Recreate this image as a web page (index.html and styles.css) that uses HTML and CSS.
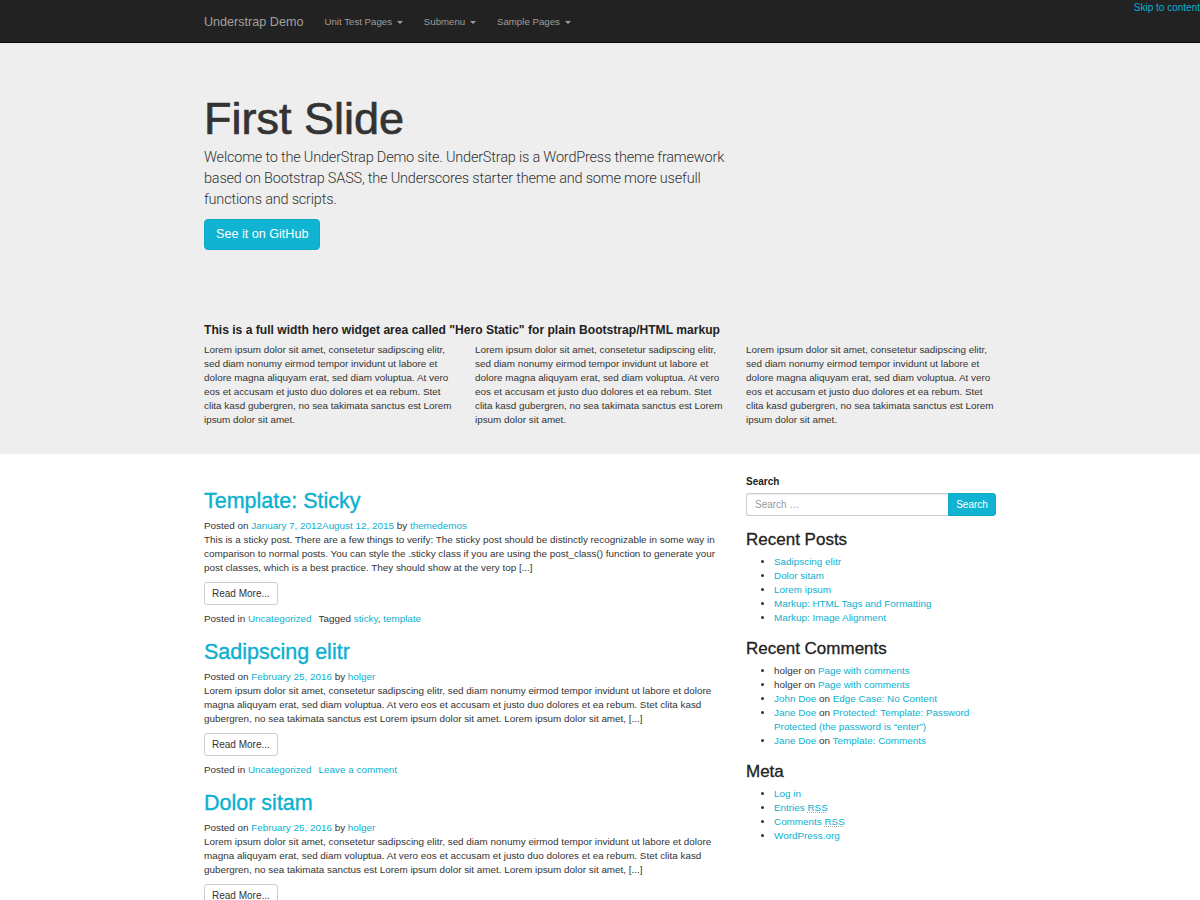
FILE: index.html
```html
<!DOCTYPE html>
<html lang="en">
<head>
<meta charset="utf-8">
<title>Understrap Demo</title>
<link rel="stylesheet" href="styles.css">
</head>
<body>
<a class="skip-link" href="#content">Skip to content</a>
<nav class="navbar">
  <div class="container navbar-inner">
    <a class="brand" href="#">Understrap Demo</a>
    <ul class="nav">
      <li><a href="#">Unit Test Pages <span class="caret"></span></a></li>
      <li><a href="#">Submenu <span class="caret"></span></a></li>
      <li><a href="#">Sample Pages <span class="caret"></span></a></li>
    </ul>
  </div>
</nav>

<section class="hero">
  <div class="container">
    <div class="slide">
      <h1 class="slide-title">First Slide</h1>
      <p class="slide-text">Welcome to the UnderStrap Demo site. UnderStrap is a WordPress theme framework based on Bootstrap SASS, the Underscores starter theme and some more usefull functions and scripts.</p>
      <a class="btn btn-primary" href="#">See it on GitHub</a>
    </div>
    <div class="hero-static">
      <h3 class="hero-static-title">This is a full width hero widget area called "Hero Static" for plain Bootstrap/HTML markup</h3>
      <div class="hero-cols">
        <p>Lorem ipsum dolor sit amet, consetetur sadipscing elitr, sed diam nonumy eirmod tempor invidunt ut labore et dolore magna aliquyam erat, sed diam voluptua. At vero eos et accusam et justo duo dolores et ea rebum. Stet clita kasd gubergren, no sea takimata sanctus est Lorem ipsum dolor sit amet.</p>
        <p>Lorem ipsum dolor sit amet, consetetur sadipscing elitr, sed diam nonumy eirmod tempor invidunt ut labore et dolore magna aliquyam erat, sed diam voluptua. At vero eos et accusam et justo duo dolores et ea rebum. Stet clita kasd gubergren, no sea takimata sanctus est Lorem ipsum dolor sit amet.</p>
        <p>Lorem ipsum dolor sit amet, consetetur sadipscing elitr, sed diam nonumy eirmod tempor invidunt ut labore et dolore magna aliquyam erat, sed diam voluptua. At vero eos et accusam et justo duo dolores et ea rebum. Stet clita kasd gubergren, no sea takimata sanctus est Lorem ipsum dolor sit amet.</p>
      </div>
    </div>
  </div>
</section>

<div class="container main-wrap" id="content">
  <main class="posts">
    <article class="post">
      <h2 class="post-title"><a href="#">Template: Sticky</a></h2>
      <div class="post-meta">Posted on <a href="#">January 7, 2012August 12, 2015</a> by <a href="#">themedemos</a></div>
      <p class="post-excerpt">This is a sticky post. There are a few things to verify: The sticky post should be distinctly recognizable in some way in comparison to normal posts. You can style the .sticky class if you are using the post_class() function to generate your post classes, which is a best practice. They should show at the very top [...]</p>
      <a class="btn btn-default" href="#">Read More...</a>
      <div class="post-footer"><span class="footer-item">Posted in <a href="#">Uncategorized</a></span><span class="footer-item">Tagged <a href="#">sticky</a>, <a href="#">template</a></span></div>
    </article>
    <article class="post">
      <h2 class="post-title"><a href="#">Sadipscing elitr</a></h2>
      <div class="post-meta">Posted on <a href="#">February 25, 2016</a> by <a href="#">holger</a></div>
      <p class="post-excerpt">Lorem ipsum dolor sit amet, consetetur sadipscing elitr, sed diam nonumy eirmod tempor invidunt ut labore et dolore magna aliquyam erat, sed diam voluptua. At vero eos et accusam et justo duo dolores et ea rebum. Stet clita kasd gubergren, no sea takimata sanctus est Lorem ipsum dolor sit amet. Lorem ipsum dolor sit amet, [...]</p>
      <a class="btn btn-default" href="#">Read More...</a>
      <div class="post-footer"><span class="footer-item">Posted in <a href="#">Uncategorized</a></span><span class="footer-item"><a href="#">Leave a comment</a></span></div>
    </article>
    <article class="post">
      <h2 class="post-title"><a href="#">Dolor sitam</a></h2>
      <div class="post-meta">Posted on <a href="#">February 25, 2016</a> by <a href="#">holger</a></div>
      <p class="post-excerpt">Lorem ipsum dolor sit amet, consetetur sadipscing elitr, sed diam nonumy eirmod tempor invidunt ut labore et dolore magna aliquyam erat, sed diam voluptua. At vero eos et accusam et justo duo dolores et ea rebum. Stet clita kasd gubergren, no sea takimata sanctus est Lorem ipsum dolor sit amet. Lorem ipsum dolor sit amet, [...]</p>
      <a class="btn btn-default" href="#">Read More...</a>
      <div class="post-footer"><span class="footer-item">Posted in <a href="#">Uncategorized</a></span><span class="footer-item"><a href="#">Leave a comment</a></span></div>
    </article>
  </main>

  <aside class="sidebar">
    <section class="widget widget-search">
      <label class="search-label">Search</label>
      <form class="search-form">
        <input class="search-input" type="text" placeholder="Search …">
        <button class="search-btn" type="button">Search</button>
      </form>
    </section>
    <section class="widget">
      <h3 class="widget-title">Recent Posts</h3>
      <ul class="widget-list">
        <li><a href="#">Sadipscing elitr</a></li>
        <li><a href="#">Dolor sitam</a></li>
        <li><a href="#">Lorem ipsum</a></li>
        <li><a href="#">Markup: HTML Tags and Formatting</a></li>
        <li><a href="#">Markup: Image Alignment</a></li>
      </ul>
    </section>
    <section class="widget">
      <h3 class="widget-title">Recent Comments</h3>
      <ul class="widget-list">
        <li>holger on <a href="#">Page with comments</a></li>
        <li>holger on <a href="#">Page with comments</a></li>
        <li><a href="#">John Doe</a> on <a href="#">Edge Case: No Content</a></li>
        <li><a href="#">Jane Doe</a> on <a href="#">Protected: Template: Password Protected (the password is “enter”)</a></li>
        <li><a href="#">Jane Doe</a> on <a href="#">Template: Comments</a></li>
      </ul>
    </section>
    <section class="widget">
      <h3 class="widget-title">Meta</h3>
      <ul class="widget-list">
        <li><a href="#">Log in</a></li>
        <li><a href="#">Entries <abbr title="Really Simple Syndication">RSS</abbr></a></li>
        <li><a href="#">Comments <abbr title="Really Simple Syndication">RSS</abbr></a></li>
        <li><a href="#">WordPress.org</a></li>
      </ul>
    </section>
  </aside>
</div>
</body>
</html>
```

FILE: styles.css
```css
* { box-sizing: border-box; }

html {
  scrollbar-width: none;
}

html, body {
  margin: 0;
  padding: 0;
}

body {
  font-family: "Liberation Sans", Arial, Helvetica, sans-serif;
  font-size: 9.9px;
  line-height: 14px;
  color: #333;
  background: #fff;
}

a {
  color: #0ab0cf;
  text-decoration: none;
}

.container {
  width: 813px;
  margin: 0 auto;
  padding: 0 10.5px;
}

/* Skip link */
.skip-link {
  position: absolute;
  top: 0;
  right: 0;
  font-size: 10px;
  line-height: 14px;
  padding-top: 1px;
  color: #0ab0cf;
  z-index: 10;
}

/* Navbar */
.navbar {
  background: #222;
  border-bottom: 1px solid #080808;
  height: 43px;
}

.navbar-inner {
  display: flex;
  align-items: center;
  height: 42px;
}

.brand {
  color: #a0a0a0;
  font-size: 12.6px;
  line-height: 18px;
  padding-right: 10.5px;
  margin-top: 2px;
}

.nav {
  list-style: none;
  margin: 0;
  padding: 0;
  display: flex;
}

.nav a {
  display: block;
  color: #9d9d9d;
  font-size: 9.7px;
  line-height: 14px;
  padding: 2px 10.5px 0;
}

.caret {
  display: inline-block;
  width: 0;
  height: 0;
  margin-left: 2px;
  vertical-align: middle;
  border-top: 3px solid #9d9d9d;
  border-left: 3px solid transparent;
  border-right: 3px solid transparent;
}

/* Hero */
.hero {
  background: #eee;
  padding-top: 51px;
  padding-bottom: 27px;
}

.slide-title {
  font-size: 45px;
  line-height: 49.5px;
  font-weight: normal;
  color: #333;
  margin: 0 0 3px;
  -webkit-text-stroke: 0.7px #333;
}

.slide-text {
  font-family: Roboto, "Liberation Sans", Arial, sans-serif;
  font-weight: 300;
  font-size: 14.5px;
  letter-spacing: -0.2px;
  line-height: 21px;
  color: #333;
  margin: 0 0 9.5px;
  max-width: 530px;
}

.btn {
  display: inline-block;
  border: 1px solid transparent;
  border-radius: 3px;
}

.btn-primary {
  background: #10b3d1;
  border-color: #0ea9c5;
  color: #fff;
  font-size: 12.6px;
  line-height: 17px;
  padding: 6px 11px;
  border-radius: 4px;
}

.hero-static {
  margin-top: 73px;
}

.hero-static-title {
  font-size: 12.1px;
  line-height: 14px;
  font-weight: bold;
  color: #222;
  margin: 0 0 6px;
}

.hero-cols {
  display: grid;
  grid-template-columns: repeat(3, 1fr);
  column-gap: 21px;
}

.hero-cols p {
  margin: 0;
}

/* Main */
.main-wrap {
  display: grid;
  grid-template-columns: repeat(3, 1fr);
  column-gap: 21px;
  padding-top: 21px;
}

.posts {
  grid-column: span 2;
  padding-top: 14px;
}

.post {
  margin-bottom: 14px;
}

.post-title {
  font-size: 21.5px;
  line-height: 24px;
  font-weight: normal;
  margin: 0 0 6px;
  -webkit-text-stroke: 0.35px #0ab0cf;
}

.post-meta {
  line-height: 14px;
}

.post-excerpt {
  margin: 0 0 7px;
}

.btn-default {
  background: #fff;
  border-color: #ccc;
  color: #333;
  font-size: 10px;
  line-height: 13px;
  padding: 4px 7px;
}

.post-footer {
  margin-top: 7px;
}

.footer-item {
  margin-right: 7px;
}

/* Sidebar */
.sidebar {
  grid-column: span 1;
}

.widget {
  margin-bottom: 13.5px;
}

.search-label {
  display: block;
  font-weight: bold;
  font-size: 10px;
  line-height: 14px;
  color: #222;
  margin-bottom: 4px;
}

.search-form {
  display: flex;
  height: 23px;
}

.search-input {
  flex: 1;
  min-width: 0;
  height: 23px;
  border: 1px solid #ccc;
  border-right: none;
  border-radius: 3px 0 0 3px;
  padding: 0 8px;
  font-family: inherit;
  font-size: 10px;
  color: #555;
  background: #fff;
  box-shadow: inset 0 1px 1px rgba(0, 0, 0, 0.075);
  outline: none;
}

.search-input::placeholder {
  color: #999;
}

.search-btn {
  width: 48px;
  height: 23px;
  border: 1px solid #0ea9c5;
  background: #10b3d1;
  color: #fff;
  font-family: inherit;
  font-size: 10px;
  padding: 0;
  border-radius: 0 3px 3px 0;
}

.widget-title {
  font-size: 17px;
  line-height: 19px;
  font-weight: normal;
  color: #222;
  margin: 0 0 6.5px;
  -webkit-text-stroke: 0.3px #222;
}

.widget-list {
  margin: 0;
  padding-left: 28px;
}

.widget-list li {
  line-height: 14px;
}

abbr {
  text-decoration: underline dotted #aaa;
}
```
